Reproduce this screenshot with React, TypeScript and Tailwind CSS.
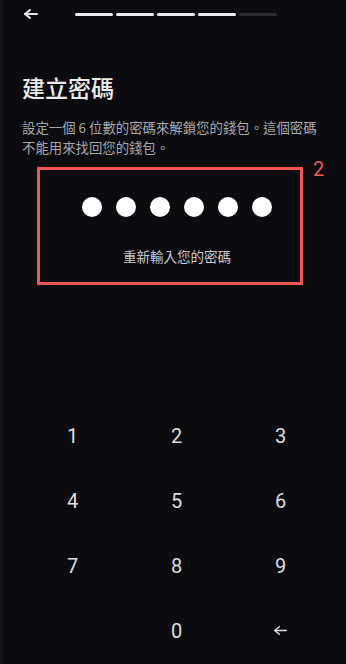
import React from 'react';

const cjk = "font-['Noto_Sans_CJK_TC','Noto_Sans',sans-serif]";

const BackArrow: React.FC<{ w: number; h: number; stroke: number }> = ({ w, h, stroke }) => (
  <svg width={w} height={h} viewBox={`0 0 ${w} ${h}`} fill="none" stroke="currentColor" strokeWidth={stroke} strokeLinecap="round" strokeLinejoin="round">
    <line x1={stroke / 2} y1={h / 2} x2={w - stroke / 2} y2={h / 2} />
    <polyline points={`${h / 2 + stroke / 2},${stroke / 2} ${stroke / 2},${h / 2} ${h / 2 + stroke / 2},${h - stroke / 2}`} />
  </svg>
);

const keys = ['1', '2', '3', '4', '5', '6', '7', '8', '9', '', '0', 'back'];

const App: React.FC = () => {
  return (
    <div className="w-[346px] h-[664px] bg-[#0c0b10] border-l-[3px] border-l-[#16161a] flex flex-col overflow-hidden">
      {/* header */}
      <div className="h-[28px] flex items-center pl-[21px]">
        <span className="text-[#e6e6e6] flex">
          <BackArrow w={14} h={10} stroke={2} />
        </span>
        <div className="ml-[37px] flex gap-[3px]">
          {[0, 1, 2, 3].map((i) => (
            <div key={i} className="w-[38px] h-[3px] rounded-full bg-[#ececec]" />
          ))}
          <div className="w-[38px] h-[3px] rounded-full bg-[#2a2a2f]" />
        </div>
      </div>

      {/* title */}
      <h1 className={`${cjk} mt-[43px] pl-[19px] text-[23px] leading-[32px] font-medium text-[#ececec]`}>
        建立密碼
      </h1>
      <p className={`${cjk} mt-[14px] pl-[19px] pr-[20px] text-[13.4px] leading-[20px] text-[#a9a9ad]`}>
        設定一個 6 位數的密碼來解鎖您的錢包。這個密碼不能用來找回您的錢包。
      </p>

      {/* pin display */}
      <div className="relative mt-[10px] ml-[34px] w-[266px] h-[118px] border-[3px] border-[#f25656]">
        <span className="absolute left-[273px] top-[-11px] font-['Roboto',sans-serif] text-[20px] leading-none text-[#f25656]">
          2
        </span>
        <div className="pt-[27px] pl-[14px] flex justify-center gap-[14px]">
          {[0, 1, 2, 3, 4, 5].map((i) => (
            <div key={i} className="w-5 h-5 rounded-full bg-white" />
          ))}
        </div>
        <p className={`${cjk} mt-[29px] pl-[14px] text-center text-[13.5px] leading-[20px] text-[#c9c9cc]`}>
          重新輸入您的密碼
        </p>
      </div>

      {/* keypad */}
      <div className="mt-[118px] ml-[17.5px] w-[312px] grid grid-cols-3">
        {keys.map((k, i) => (
          <div key={i} className="h-[65px] flex items-center justify-center font-['Roboto',sans-serif] text-[20px] text-[#dedede]">
            {k === 'back' ? (
              <span className="flex text-[#dedede]">
                <BackArrow w={13} h={9} stroke={1.5} />
              </span>
            ) : (
              k
            )}
          </div>
        ))}
      </div>
    </div>
  );
};

export default App;
